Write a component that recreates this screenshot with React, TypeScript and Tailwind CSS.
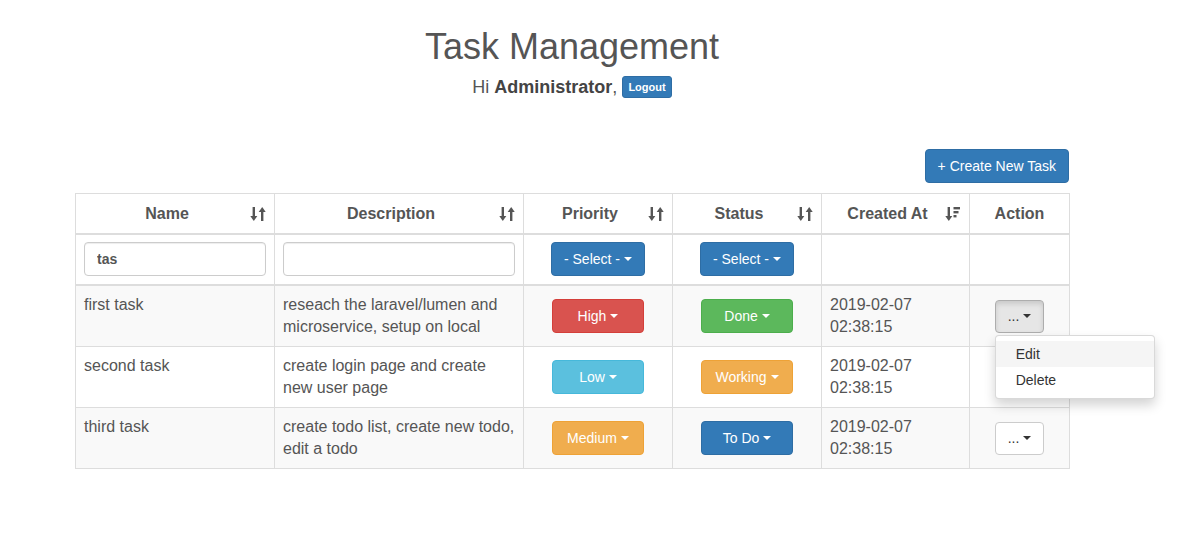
import React from "react";

const Caret = () => (
  <span className="inline-block w-0 h-0 ml-[4px] align-middle border-solid border-t-[4px] border-x-[4px] border-b-0 border-x-transparent border-t-current" />
);

const SortIcon = () => (
  <svg width="16" height="16" viewBox="0 0 16 16" fill="currentColor" className="shrink-0">
    <rect x="2.6" y="1" width="2.4" height="9.5" />
    <path d="M0.3 10 H7.3 L3.8 15 Z" />
    <path d="M8.7 6 H15.7 L12.2 1 Z" />
    <rect x="11" y="5.5" width="2.4" height="9.5" />
  </svg>
);

const SortAltIcon = () => (
  <svg width="16" height="16" viewBox="0 0 16 16" fill="currentColor" className="shrink-0">
    <rect x="2.6" y="1" width="2.4" height="9.5" />
    <path d="M0.3 10 H7.3 L3.8 15 Z" />
    <rect x="8.5" y="1" width="6.5" height="2.4" />
    <rect x="8.5" y="5" width="5" height="2.4" />
    <rect x="8.5" y="9" width="3" height="2.4" />
  </svg>
);

type Col = { label: string; icon?: "sort" | "alt"; w: string };

const cols: Col[] = [
  { label: "Name", icon: "sort", w: "w-[199px]" },
  { label: "Description", icon: "sort", w: "w-[249px]" },
  { label: "Priority", icon: "sort", w: "w-[149px]" },
  { label: "Status", icon: "sort", w: "w-[149px]" },
  { label: "Created At", icon: "alt", w: "w-[148px]" },
  { label: "Action", w: "w-[100px]" },
];

const colorBtn: Record<string, string> = {
  High: "bg-[#d9534f] border-[#d43f3a]",
  Low: "bg-[#5bc0de] border-[#46b8da]",
  Medium: "bg-[#f0ad4e] border-[#eea236]",
  Done: "bg-[#5cb85c] border-[#4cae4c]",
  Working: "bg-[#f0ad4e] border-[#eea236]",
  "To Do": "bg-[#337ab7] border-[#2e6da4]",
};

const rows = [
  {
    name: "first task",
    desc: "reseach the laravel/lumen and microservice, setup on local",
    priority: "High",
    status: "Done",
    open: true,
  },
  {
    name: "second task",
    desc: "create login page and create new user page",
    priority: "Low",
    status: "Working",
    open: false,
  },
  {
    name: "third task",
    desc: "create todo list, create new todo, edit a todo",
    priority: "Medium",
    status: "To Do",
    open: false,
  },
];

const ColorButton = ({ label }: { label: string }) => (
  <button
    className={`w-[92px] h-[34px] rounded-[4px] border text-white text-[14px] leading-[20px] inline-flex items-center justify-center ${colorBtn[label]}`}
  >
    {label}
    <Caret />
  </button>
);

export default function App() {
  return (
    <div className="w-[1201px] h-[534px] bg-white text-[#555] font-['Liberation_Sans',Arial,sans-serif] overflow-hidden">
      <div className="ml-[75px] w-[994px]">
        <h1 className="pt-[27px] text-center text-[36px] leading-[40px] font-normal">Task Management</h1>
        <div className="mt-[9px] h-[22px] flex items-center justify-center text-[18px] leading-[22px]">
          <span>
            Hi <b className="font-bold text-[#444]">Administrator</b>,
          </span>
          <button className="ml-[5px] h-[22px] px-[5px] rounded-[3px] bg-[#337ab7] border border-[#2e6da4] text-white text-[11px] font-bold leading-[18px]">
            Logout
          </button>
        </div>
        <div className="mt-[51px] flex justify-end">
          <button className="h-[34px] px-[12px] rounded-[4px] bg-[#337ab7] border border-[#2e6da4] text-white text-[14px] leading-[20px]">
            + Create New Task
          </button>
        </div>
        <table className="mt-[10px] w-[994px] table-fixed border-collapse text-[16px] leading-[22px]">
          <thead>
            <tr>
              {cols.map((c) => (
                <th
                  key={c.label}
                  className={`${c.w} border border-[#ddd] border-b-2 px-[8px] py-[8px] leading-[23px] font-bold text-[#555]`}
                >
                  <div className="flex items-center">
                    <span className="flex-1 text-center">{c.label}</span>
                    {c.icon === "sort" && <SortIcon />}
                    {c.icon === "alt" && <SortAltIcon />}
                  </div>
                </th>
              ))}
            </tr>
            <tr>
              <th className="border border-[#ddd] border-b-2 px-[8px] pt-[7px] pb-[8px]">
                <input
                  defaultValue="tas"
                  className="w-full h-[34px] px-[12px] rounded-[4px] border border-[#ccc] shadow-[inset_0_1px_1px_rgba(0,0,0,0.075)] text-[14px] font-bold text-[#555] outline-none"
                />
              </th>
              <th className="border border-[#ddd] border-b-2 px-[8px] pt-[7px] pb-[8px]">
                <input className="w-full h-[34px] px-[12px] rounded-[4px] border border-[#ccc] shadow-[inset_0_1px_1px_rgba(0,0,0,0.075)] text-[14px] font-bold text-[#555] outline-none" />
              </th>
              <th className="border border-[#ddd] border-b-2 px-[8px] pt-[7px] pb-[8px] text-center">
                <button className="h-[34px] px-[12px] rounded-[4px] bg-[#337ab7] border border-[#2e6da4] text-white text-[14px] font-normal leading-[20px] inline-flex items-center">
                  - Select -<Caret />
                </button>
              </th>
              <th className="border border-[#ddd] border-b-2 px-[8px] pt-[7px] pb-[8px] text-center">
                <button className="h-[34px] px-[12px] rounded-[4px] bg-[#337ab7] border border-[#2e6da4] text-white text-[14px] font-normal leading-[20px] inline-flex items-center">
                  - Select -<Caret />
                </button>
              </th>
              <th className="border border-[#ddd] border-b-2"></th>
              <th className="border border-[#ddd] border-b-2"></th>
            </tr>
          </thead>
          <tbody>
            {rows.map((r, i) => (
              <tr key={r.name} className={i % 2 === 0 ? "bg-[#f9f9f9]" : "bg-white"}>
                <td className="border border-[#ddd] p-[8px] align-top">{r.name}</td>
                <td className="border border-[#ddd] p-[8px] align-top">{r.desc}</td>
                <td className="border border-[#ddd] p-[8px] align-middle text-center">
                  <ColorButton label={r.priority} />
                </td>
                <td className="border border-[#ddd] p-[8px] align-middle text-center">
                  <ColorButton label={r.status} />
                </td>
                <td className="border border-[#ddd] p-[8px] align-top">
                  2019-02-07
                  <br />
                  02:38:15
                </td>
                <td className="border border-[#ddd] p-[8px] align-middle text-center">
                  {i !== 1 && (
                    <div className="relative inline-block">
                      <button
                        className={`h-[33px] px-[12px] rounded-[4px] border text-[#333] text-[14px] leading-[20px] inline-flex items-center ${
                          r.open
                            ? "bg-[#e6e6e6] border-[#adadad] shadow-[inset_0_3px_5px_rgba(0,0,0,0.125)]"
                            : "bg-white border-[#ccc]"
                        }`}
                      >
                        ...
                        <Caret />
                      </button>
                      {r.open && (
                        <div className="absolute left-0 top-[35px] z-10 w-[160px] py-[5px] bg-white border border-[rgba(0,0,0,0.15)] rounded-[4px] shadow-[0_6px_12px_rgba(0,0,0,0.175)] text-left">
                          <div className="px-[20px] py-[3px] text-[14px] leading-[20px] text-[#333] bg-[#f5f5f5]">Edit</div>
                          <div className="px-[20px] py-[3px] text-[14px] leading-[20px] text-[#333]">Delete</div>
                        </div>
                      )}
                    </div>
                  )}
                </td>
              </tr>
            ))}
          </tbody>
        </table>
      </div>
    </div>
  );
}
